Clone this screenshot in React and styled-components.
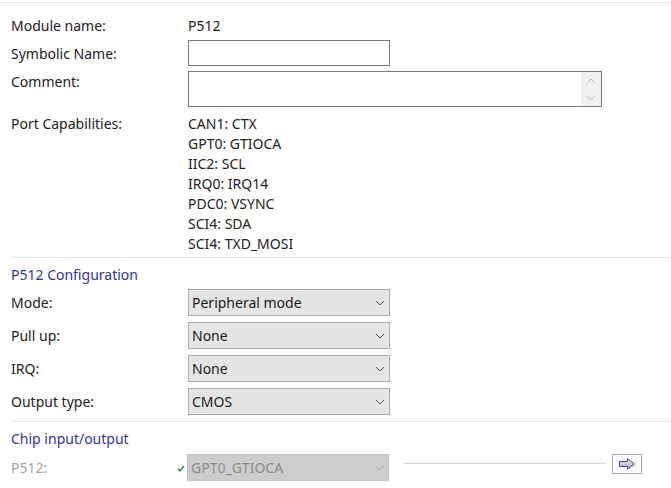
import styled, { createGlobalStyle } from "styled-components"

const GlobalStyle = createGlobalStyle`
    body{
        margin: 0;
        background: #ffffff;
        font-family: "Noto Sans", "Open Sans", sans-serif;
        font-size: 14px;
        color: #222222;
    }
`

const Page = styled.div`
    width: 671px;
    height: 488px;
    overflow: hidden;
    padding-top: 2px;
    box-sizing: border-box;
`

const TopRule = styled.div`
    height: 1px;
    background-color: #e6e6e6;
`

const Section = styled.div`
    display: flex;
    flex-direction: column;
    padding-left: 11px;
`

const Row = styled.div`
    display: flex;
    align-items: ${props => props.$top ? "flex-start" : "center"};
    height: ${props => props.$h}px;
    margin-top: ${props => props.$mt}px;
`

const Label = styled.div`
    width: ${props => props.$w || 177}px;
    flex-shrink: 0;
    line-height: 20px;
    padding-top: 1px;
    color: ${props => props.$disabled ? "#a3a3a3" : "#222222"};
`

const Value = styled.div`
    line-height: 20px;
    padding-top: 1px;
`

const TextInput = styled.div`
    width: 202px;
    height: 26px;
    box-sizing: border-box;
    border: 1px solid #7a7a7a;
    background: #ffffff;
`

const TextArea = styled.div`
    width: 414px;
    height: 36px;
    box-sizing: border-box;
    border: 1px solid #7a7a7a;
    display: flex;
    justify-content: flex-end;
`

const ScrollBar = styled.div`
    width: 20px;
    background-color: #f0f0f0;
    display: flex;
    flex-direction: column;
    justify-content: space-around;
    align-items: center;
`

const CapList = styled.div`
    display: flex;
    flex-direction: column;
    line-height: 20px;
    padding-top: 1px;
`

const Divider = styled.div`
    height: 1px;
    background-color: #e3e3e3;
    margin-left: 11px;
    margin-top: ${props => props.$mt}px;
`

const SectionTitle = styled.div`
    line-height: 20px;
    padding-top: 1px;
    color: #2f34a6;
`

const Select = styled.div`
    width: 202px;
    height: 27px;
    box-sizing: border-box;
    border: 1px solid ${props => props.$disabled ? "#c4c4c4" : "#adadad"};
    background-color: ${props => props.$disabled ? "#cccccc" : "#e5e5e5"};
    color: ${props => props.$disabled ? "#8c8c8c" : "#1a1a1a"};
    display: flex;
    align-items: center;
    justify-content: space-between;
    padding: 0 4px 0 3px;
    flex-shrink: 0;
`

const Check = styled.div`
    width: 10px;
    flex-shrink: 0;
    display: flex;
    align-items: center;
    padding-top: 2px;
`

const Wire = styled.div`
    width: 202px;
    height: 1px;
    background-color: #d4d4d4;
    margin-left: 15px;
    margin-top: -8px;
`

const ArrowButton = styled.button`
    width: 30px;
    height: 20px;
    margin-left: 6px;
    margin-top: -8px;
    padding: 0;
    border: 1px solid #a8a8a8;
    background: #ffffff;
    display: flex;
    align-items: center;
    justify-content: center;
`

const Chevron = ({ color = "#5a5a5a", up }) => (
    <svg width="10" height="6" viewBox="0 0 10 6">
        <polyline
            points={up ? "1,5 5,1 9,5" : "1,1 5,5 9,1"}
            fill="none"
            stroke={color}
            strokeWidth="1"
        />
    </svg>
)

const CheckMark = () => (
    <svg width="8" height="7" viewBox="0 0 8 7">
        <polyline points="1,3.8 3,5.8 7,1" fill="none" stroke="#3a8f3a" strokeWidth="1.5" />
    </svg>
)

const Arrow = () => (
    <svg width="18" height="12" viewBox="0 0 18 12">
        <defs>
            <linearGradient id="arrowFill" x1="0" y1="0" x2="0" y2="1">
                <stop offset="0" stopColor="#f2f2ff" />
                <stop offset="1" stopColor="#9c9cd0" />
            </linearGradient>
        </defs>
        <path d="M1.5 3.5 H9.5 V0.8 L16.5 6 L9.5 11.2 V8.5 H1.5 Z" fill="url(#arrowFill)" stroke="#4a4a5a" strokeWidth="1" />
    </svg>
)

const DropDown = ({ value, disabled }) => (
    <Select $disabled={disabled}>
        <span>{value}</span>
        <Chevron color={disabled ? "#b0b0b0" : "#5a5a5a"} />
    </Select>
)

const caps = ["CAN1: CTX", "GPT0: GTIOCA", "IIC2: SCL", "IRQ0: IRQ14", "PDC0: VSYNC", "SCI4: SDA", "SCI4: TXD_MOSI"]

const config = [
    { label: "Mode:", value: "Peripheral mode" },
    { label: "Pull up:", value: "None" },
    { label: "IRQ:", value: "None" },
    { label: "Output type:", value: "CMOS" },
]

export default function App() {
    return (
        <Page>
            <GlobalStyle />
            <TopRule />
            <Section>
                <Row $h={24} $mt={10}>
                    <Label>Module name:</Label>
                    <Value>P512</Value>
                </Row>
                <Row $h={26} $mt={3}>
                    <Label>Symbolic Name:</Label>
                    <TextInput />
                </Row>
                <Row $h={36} $mt={5} $top>
                    <Label>Comment:</Label>
                    <TextArea>
                        <ScrollBar>
                            <Chevron up color="#c2c2c2" />
                            <Chevron color="#c2c2c2" />
                        </ScrollBar>
                    </TextArea>
                </Row>
                <Row $h={140} $mt={6} $top>
                    <Label>Port Capabilities:</Label>
                    <CapList>
                        {caps.map(c => <span key={c}>{c}</span>)}
                    </CapList>
                </Row>
            </Section>
            <Divider $mt={4} />
            <Section>
                <Row $h={20} $mt={6}>
                    <SectionTitle>P512 Configuration</SectionTitle>
                </Row>
                {config.map((c, i) => (
                    <Row key={c.label} $h={27} $mt={i === 0 ? 5 : 6}>
                        <Label>{c.label}</Label>
                        <DropDown value={c.value} />
                    </Row>
                ))}
            </Section>
            <Divider $mt={6} />
            <Section>
                <Row $h={20} $mt={6}>
                    <SectionTitle>Chip input/output</SectionTitle>
                </Row>
                <Row $h={27} $mt={6}>
                    <Label $w={166} $disabled>P512:</Label>
                    <Check><CheckMark /></Check>
                    <DropDown value="GPT0_GTIOCA" disabled />
                    <Wire />
                    <ArrowButton>
                        <Arrow />
                    </ArrowButton>
                </Row>
            </Section>
        </Page>
    )
}
